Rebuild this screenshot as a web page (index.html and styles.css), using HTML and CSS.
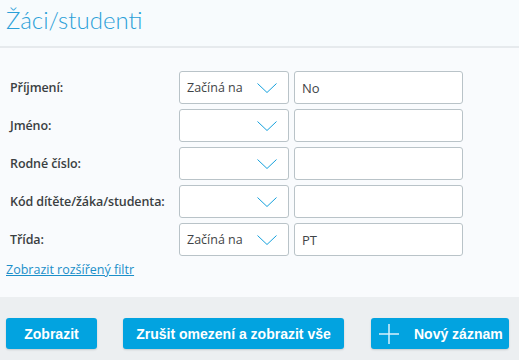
FILE: index.html
```html
<!DOCTYPE html>
<html lang="cs">
<head>
<meta charset="utf-8">
<link rel="stylesheet" href="styles.css">
</head>
<body>
<header class="header"><h1 class="title">Žáci/studenti</h1></header>
<main class="filter">
  <div class="rows">
    <div class="row"><label class="label">Příjmení:</label><div class="select"><span class="sel-text">Začíná na</span><svg class="chev" viewBox="0 0 20 10"><path d="M0.5 0.5 L10 9.5 L19.5 0.5"/></svg></div><div class="input">No</div></div>
    <div class="row"><label class="label">Jméno:</label><div class="select"><span class="sel-text"></span><svg class="chev" viewBox="0 0 20 10"><path d="M0.5 0.5 L10 9.5 L19.5 0.5"/></svg></div><div class="input"></div></div>
    <div class="row"><label class="label">Rodné číslo:</label><div class="select"><span class="sel-text"></span><svg class="chev" viewBox="0 0 20 10"><path d="M0.5 0.5 L10 9.5 L19.5 0.5"/></svg></div><div class="input"></div></div>
    <div class="row"><label class="label">Kód dítěte/žáka/studenta:</label><div class="select"><span class="sel-text"></span><svg class="chev" viewBox="0 0 20 10"><path d="M0.5 0.5 L10 9.5 L19.5 0.5"/></svg></div><div class="input"></div></div>
    <div class="row"><label class="label">Třída:</label><div class="select"><span class="sel-text">Začíná na</span><svg class="chev" viewBox="0 0 20 10"><path d="M0.5 0.5 L10 9.5 L19.5 0.5"/></svg></div><div class="input">PT</div></div>
  </div>
  <a class="link" href="#">Zobrazit rozšířený filtr</a>
</main>
<footer class="footer">
  <button class="btn btn-show">Zobrazit</button>
  <button class="btn btn-reset">Zrušit omezení a zobrazit vše</button>
  <button class="btn btn-new"><svg class="plus" viewBox="0 0 20 20"><path d="M10 0 V20 M0 10 H20"/></svg>Nový záznam</button>
</footer>
</body>
</html>
```
FILE: styles.css
```css
* { box-sizing: border-box; }
html, body { margin: 0; padding: 0; }
body {
  width: 519px;
  height: 360px;
  background: #f8fbfd;
  font-family: "Open Sans", "Noto Sans", sans-serif;
  overflow: hidden;
  display: flex;
  flex-direction: column;
}
.header {
  height: 48px;
  background: #f7fbfd;
  border-bottom: 2px solid #e6eaed;
  padding: 3px 0 0 6px;
}
.title {
  margin: 0;
  font-family: "Lato", "Open Sans", sans-serif;
  font-weight: 300;
  font-size: 24px;
  line-height: 34px;
  color: #2ba0d8;
}
.filter {
  flex: 1;
  padding: 23px 0 0 6px;
  background: #f9fbfd;
}
.rows { display: flex; flex-direction: column; gap: 5px; }
.row { display: flex; align-items: center; height: 33px; }
.label {
  width: 173px;
  padding-left: 4px;
  font-weight: 600;
  font-size: 12.5px;
  letter-spacing: -0.1px;
  color: #3b3f42;
}
.select {
  width: 110px;
  height: 33px;
  border: 1px solid #b9c3c8;
  border-radius: 3px;
  background: #fff;
  display: flex;
  align-items: center;
  padding: 0 11px 0 7px;
  justify-content: space-between;
  font-size: 12.5px;
  color: #3f4447;
}
.chev { width: 20px; height: 10px; margin-top: 1px; }
.chev path { fill: none; stroke: #14a0dc; stroke-width: 1; }
.input {
  margin-left: 5px;
  width: 169px;
  height: 33px;
  border: 1px solid #b9c3c8;
  border-radius: 3px;
  background: #fff;
  display: flex;
  align-items: center;
  padding-left: 7px;
  font-size: 13px;
  color: #3f4447;
}
.link {
  display: inline-block;
  margin-top: 5px;
  font-size: 12.5px;
  color: #1b8fc9;
  text-decoration: underline;
}
.footer {
  height: 63px;
  background: #eceff1;
  display: flex;
  align-items: flex-start;
  padding: 21px 0 0 6px;
}
.btn {
  height: 31px;
  border: none;
  border-radius: 3px;
  background: #02a3e0;
  color: #fff;
  font-family: "Liberation Sans", Arial, sans-serif;
  font-weight: bold;
  font-size: 14px;
  display: flex;
  align-items: center;
  justify-content: center;
  box-shadow: 0 1px 2px rgba(0,0,0,0.15);
  padding: 0;
}
.btn-show { width: 91px; }
.btn-reset { width: 221px; margin-left: 26px; }
.btn-new { width: 138px; margin-left: 27px; justify-content: flex-start; padding-left: 8px; }
.plus { width: 20px; height: 20px; margin-right: 15px; }
.plus path { stroke: #d9f1fb; stroke-width: 1.5; fill: none; }
```
